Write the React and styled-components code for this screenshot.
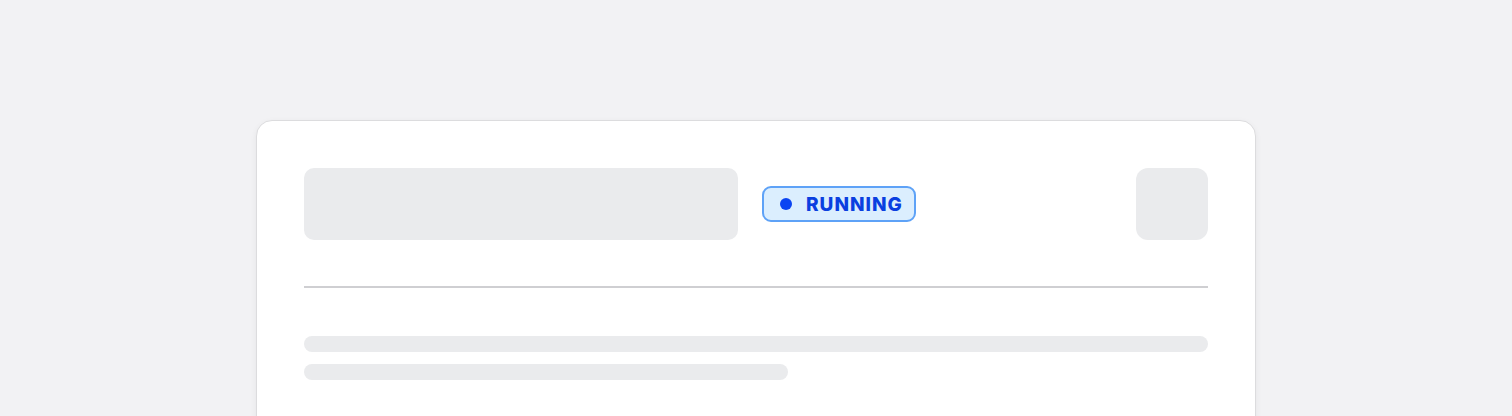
import React from 'react'
import styled, { createGlobalStyle } from 'styled-components'

const GlobalStyle = createGlobalStyle`
  html, body {
    margin: 0;
    padding: 0;
    background: #f2f2f4;
    font-family: Inter, "Noto Sans", sans-serif;
  }
`

const Page = styled.div`
  display: flex;
  justify-content: center;
  align-items: flex-start;
  padding-top: 120px;
  height: 416px;
  box-sizing: border-box;
  overflow: hidden;
`

const Card = styled.div`
  width: 1000px;
  box-sizing: border-box;
  background: #ffffff;
  border: 1px solid #dcdcde;
  border-radius: 16px;
  box-shadow: 0 2px 6px rgba(0, 0, 0, 0.06);
  padding: 47px 47px 120px;
  flex-shrink: 0;
`

const Header = styled.div`
  display: flex;
  align-items: center;
  gap: 24px;
  height: 72px;
`

const Skeleton = styled.div`
  background: #eaebed;
  width: ${(p) => (p.$w ? `${p.$w}px` : '100%')};
  height: ${(p) => p.$h}px;
  border-radius: ${(p) => p.$r}px;
  flex-shrink: 0;
`

const Spacer = styled.div`
  flex: 1;
`

const Badge = styled.div`
  display: flex;
  align-items: center;
  gap: 14px;
  height: 36px;
  box-sizing: border-box;
  padding: 0 11px 0 16px;
  border: 2px solid #5ea2f7;
  border-radius: 9px;
  background: #dbeefe;
  color: #0a3fe0;
  font-weight: 800;
  font-size: 19px;
  letter-spacing: 1px;
`

const Dot = styled.span`
  width: 12px;
  height: 12px;
  border-radius: 50%;
  background: #0b44f2;
`

const Divider = styled.div`
  height: 2px;
  background: #cfcfd2;
  margin: 46px 0 48px;
`

const Lines = styled.div`
  display: flex;
  flex-direction: column;
  gap: 12px;
`

export default function App() {
  return (
    <>
      <GlobalStyle />
      <Page>
        <Card>
          <Header>
            <Skeleton $w={434} $h={72} $r={10} />
            <Badge>
              <Dot />
              RUNNING
            </Badge>
            <Spacer />
            <Skeleton $w={72} $h={72} $r={12} />
          </Header>
          <Divider />
          <Lines>
            <Skeleton $h={16} $r={8} />
            <Skeleton $w={484} $h={16} $r={8} />
          </Lines>
        </Card>
      </Page>
    </>
  )
}
